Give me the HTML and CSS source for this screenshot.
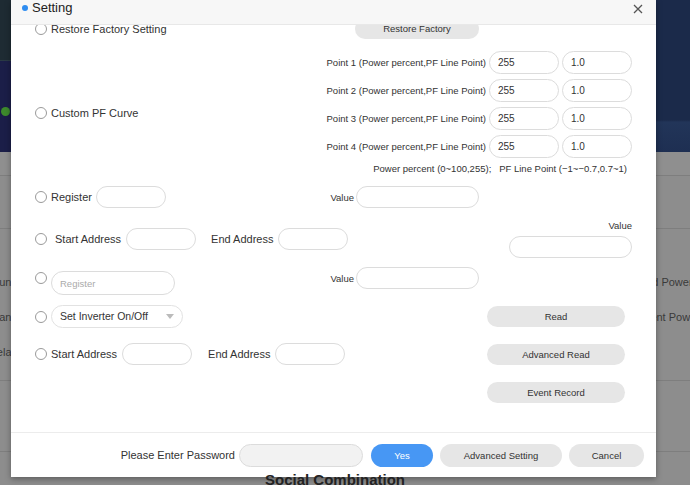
FILE: index.html
```html
<!DOCTYPE html>
<html lang="en">
<head>
  <meta charset="UTF-8" />
  <title>Setting</title>
  <meta name="viewport" content="width=device-width, initial-scale=1.0" />
  <link rel="stylesheet" href="styles.css">
</head>
<body>

<div class="page">

  <!-- page behind the dialog -->
  <div class="backdrop">
    <div class="side side-left">
      <div class="band band-dark"></div>
      <div class="band band-navy"><span class="led"></span></div>
      <div class="bg-row bg-row-a"></div>
      <div class="bg-row bg-row-b"></div>
      <div class="bg-list">
        <div class="bg-text">Runs</div>
        <div class="bg-text">Trans</div>
        <div class="bg-text">Delay</div>
      </div>
      <div class="bg-row bg-row-c"></div>
    </div>
    <div class="side side-right">
      <div class="band band-blue"></div>
      <div class="bg-row bg-row-a"></div>
      <div class="bg-row bg-row-b"></div>
      <div class="bg-list">
        <div class="bg-text">Rated Power</div>
        <div class="bg-text">Current Power</div>
        <div class="bg-text"></div>
      </div>
      <div class="bg-row bg-row-c"></div>
    </div>
  </div>

  <div class="bg-title">Social Combination</div>

  <!-- Setting dialog -->
  <div class="modal">
    <div class="modal-head">
      <span class="dot"></span>
      <span class="title">Setting</span>
      <svg class="close" width="10" height="10" viewBox="0 0 10 10">
        <path d="M1 1L9 9M9 1L1 9" stroke="#555" stroke-width="1.3" fill="none"/>
      </svg>
    </div>

    <div class="modal-body">

      <div class="row row-restore">
        <label class="opt opt-wide"><span class="radio"></span>Restore Factory Setting</label>
        <button class="btn btn-restore">Restore Factory</button>
      </div>

      <div class="row row-pf">
        <label class="opt"><span class="radio"></span>Custom PF Curve</label>
        <div class="points">
          <div class="pt-row">
            <span class="small">Point 1 (Power percent,PF Line Point)</span>
            <input class="field field-pt" value="255">
            <input class="field field-pt" value="1.0">
          </div>
          <div class="pt-row">
            <span class="small">Point 2 (Power percent,PF Line Point)</span>
            <input class="field field-pt" value="255">
            <input class="field field-pt" value="1.0">
          </div>
          <div class="pt-row">
            <span class="small">Point 3 (Power percent,PF Line Point)</span>
            <input class="field field-pt" value="255">
            <input class="field field-pt" value="1.0">
          </div>
          <div class="pt-row">
            <span class="small">Point 4 (Power percent,PF Line Point)</span>
            <input class="field field-pt" value="255">
            <input class="field field-pt" value="1.0">
          </div>
          <div class="note">Power percent (0~100,255);&nbsp;&nbsp; PF Line Point (&minus;1~&minus;0.7,0.7~1)</div>
        </div>
      </div>

      <div class="row row-reg">
        <div class="lhs">
          <label class="opt"><span class="radio"></span>Register</label>
          <input class="field field-sm">
        </div>
        <div class="val">
          <span class="small">Value</span>
          <input class="field field-md">
        </div>
      </div>

      <div class="row row-range">
        <span class="radio"></span>
        <span class="lbl lbl-start">Start Address</span>
        <input class="field field-sm">
        <span class="lbl lbl-end">End Address</span>
        <input class="field field-sm">
        <div class="val-stack">
          <span class="small">Value</span>
          <input class="field field-md">
        </div>
      </div>

      <div class="row row-reg2">
        <div class="lhs">
          <span class="radio"></span>
          <input class="field field-reg" placeholder="Register">
        </div>
        <div class="val">
          <span class="small">Value</span>
          <input class="field field-md">
        </div>
      </div>

      <div class="row row-select">
        <span class="radio"></span>
        <div class="select">Set Inverter On/Off<span class="caret"></span></div>
        <button class="btn btn-side">Read</button>
      </div>

      <div class="row row-range2">
        <span class="radio"></span>
        <span class="lbl lbl-start2">Start Address</span>
        <input class="field field-sm">
        <span class="lbl lbl-end2">End Address</span>
        <input class="field field-sm">
        <button class="btn btn-side">Advanced Read</button>
      </div>

      <div class="row row-event">
        <button class="btn btn-side">Event Record</button>
      </div>

    </div>

    <div class="modal-foot">
      <span class="foot-label">Please Enter Password</span>
      <input class="field field-pass" type="password">
      <button class="btn btn-yes">Yes</button>
      <button class="btn btn-adv">Advanced Setting</button>
      <button class="btn btn-cancel">Cancel</button>
    </div>
  </div>

</div>

</body>
</html>
```

FILE: styles.css
```css
body, html {
  margin: 0;
  padding: 0;
  font-family: "Liberation Sans", Arial, sans-serif;
  color: #333;
}

.page {
  position: relative;
  width: 690px;
  height: 485px;
  overflow: hidden;
  background: #8d8d8d;
}

/* page behind the dialog */
.backdrop {
  display: flex;
  justify-content: space-between;
  height: 100%;
}

.side {
  display: flex;
  flex-direction: column;
  width: 60px;
  overflow: hidden;
}

.side-right {
  width: 80px;
}

.band-dark {
  height: 60px;
  background: #1e2b33;
  border-bottom: 1px solid #2a3a44;
}

.band-navy {
  height: 91px;
  background: #1b1e48;
  display: flex;
  align-items: center;
}

.band-blue {
  height: 152px;
  background: linear-gradient(#1b2a4a 0, #1b2a4a 120px, #223559 122px, #1e2f52 152px);
}

.led {
  width: 9px;
  height: 9px;
  border-radius: 50%;
  background: #3d8a2c;
  margin-left: 1px;
  margin-top: 10px;
}

.bg-row {
  border-bottom: 1px solid #7e7e7e;
}

.bg-row-a {
  height: 23px;
  background: #8f8f8f;
}

.bg-row-b {
  height: 52px;
  background: #8d8d8d;
}

.bg-row-c {
  height: 70px;
  border-top: 1px solid #7e7e7e;
}

.bg-list {
  height: 151px;
  padding-top: 46px;
  box-sizing: border-box;
}

.bg-text {
  height: 35px;
  font-size: 11px;
  line-height: 14px;
  color: #3a3a3a;
  white-space: nowrap;
}

.side-left .bg-text {
  text-align: right;
  width: 30px;
  margin-left: -13px;
}

.side-right .bg-text {
  padding-left: 19px;
}

.bg-title {
  position: absolute;
  left: 265px;
  top: 471px;
  font-size: 15px;
  font-weight: bold;
  color: #222;
  z-index: 2;
}

/* dialog */
.modal {
  position: absolute;
  left: 11px;
  top: 0;
  width: 645px;
  height: 477px;
  background: #fff;
  box-shadow: 0 2px 6px rgba(0, 0, 0, 0.35);
  display: flex;
  flex-direction: column;
  z-index: 1;
}

.modal-head {
  height: 23px;
  background: #f7f7f7;
  border-bottom: 1px solid #e8e8e8;
  display: flex;
  align-items: flex-start;
  padding: 1px 13px 0 11px;
  box-sizing: content-box;
  position: relative;
  z-index: 1;
}

.dot {
  width: 6px;
  height: 6px;
  border-radius: 50%;
  background: #2e8cf0;
  margin-top: 4px;
  margin-right: 4px;
}

.title {
  font-size: 13px;
  line-height: 14px;
  color: #222;
}

.close {
  margin-left: auto;
  margin-top: 3px;
}

.modal-body {
  flex: 1;
  overflow: hidden;
  padding: 0 24px;
}

.row {
  display: flex;
  align-items: center;
}

.radio {
  flex: none;
  width: 10px;
  height: 10px;
  border: 1px solid #9a9a9a;
  border-radius: 50%;
  background: #fff;
}

.opt {
  display: flex;
  align-items: center;
  font-size: 11px;
}

.opt .radio {
  margin-right: 4px;
}

.opt-wide {
  width: 320px;
}

.small {
  font-size: 9.5px;
  white-space: nowrap;
}

.lbl {
  font-size: 11px;
  white-space: nowrap;
}

.field {
  box-sizing: border-box;
  border: 1px solid #dcdcdc;
  border-radius: 12px;
  background: #fff;
  height: 22px;
  padding: 0 8px;
  font-family: inherit;
  font-size: 10px;
  color: #333;
  outline: none;
}

.field::placeholder {
  color: #aaa;
}

.btn {
  box-sizing: border-box;
  border: none;
  border-radius: 11px;
  background: #e6e6e6;
  font-family: inherit;
  font-size: 9.5px;
  color: #333;
  height: 21px;
  padding: 0;
}

/* restore */
.row-restore {
  height: 20px;
  margin-top: -6px;
}

.btn-restore {
  width: 124px;
  height: 20px;
  border-radius: 10px;
  line-height: 16px;
}

/* custom pf curve */
.row-pf {
  margin-top: 12px;
}

.points {
  margin-left: auto;
  display: flex;
  flex-direction: column;
  gap: 5px;
}

.pt-row {
  display: flex;
  align-items: center;
  justify-content: flex-end;
  gap: 3px;
}

.field-pt {
  width: 70px;
  height: 23px;
}

.note {
  font-size: 9.5px;
  line-height: 12px;
  text-align: right;
  margin-right: 5px;
}

/* register / value */
.row-reg {
  margin-top: 11px;
  height: 22px;
}

.lhs {
  width: 285px;
  display: flex;
  align-items: center;
  gap: 4px;
}

.val {
  width: 159px;
  display: flex;
  align-items: center;
  justify-content: flex-end;
  gap: 2px;
}

.field-sm {
  width: 70px;
}

.field-md {
  width: 123px;
}

/* start / end address */
.row-range {
  margin-top: 12px;
  height: 38px;
}

.row-range .field,
.row-range2 .field {
  margin-left: 5px;
}

.lbl-start {
  margin-left: 8px;
}

.lbl-end {
  margin-left: 15px;
}

.val-stack {
  margin-left: auto;
  display: flex;
  flex-direction: column;
  align-items: flex-end;
  gap: 4px;
}

.row-range .val-stack .field {
  margin-left: 0;
}

.val-stack .small {
  line-height: 12px;
}

/* register with placeholder */
.row-reg2 {
  margin-top: 9px;
  height: 28px;
  align-items: flex-start;
}

.row-reg2 .lhs {
  align-items: flex-start;
}

.row-reg2 .radio {
  margin-top: 5px;
}

.field-reg {
  width: 124px;
  height: 24px;
  margin-top: 4px;
  font-size: 9.5px;
}

/* inverter on/off */
.row-select {
  margin-top: 10px;
  height: 23px;
}

.select {
  box-sizing: border-box;
  width: 132px;
  height: 23px;
  margin-left: 4px;
  border: 1px solid #e2e2e2;
  border-radius: 12px;
  padding-left: 8px;
  font-size: 10.5px;
  line-height: 21px;
  display: flex;
  align-items: center;
}

.caret {
  margin-left: auto;
  margin-right: 8px;
  width: 0;
  height: 0;
  border-left: 4.5px solid transparent;
  border-right: 4.5px solid transparent;
  border-top: 5px solid #bbb;
}

.btn-side {
  width: 138px;
  margin-left: auto;
  margin-right: 7px;
}

.row-range2 {
  margin-top: 15px;
  height: 22px;
}

.lbl-start2 {
  margin-left: 4px;
}

.lbl-end2 {
  margin-left: 16px;
}

.row-event {
  margin-top: 17px;
  height: 21px;
}

/* footer */
.modal-foot {
  height: 44px;
  border-top: 1px solid #ececec;
  display: flex;
  align-items: center;
  justify-content: flex-end;
  padding-right: 12px;
  gap: 7px;
}

.foot-label {
  font-size: 11px;
  margin-right: -3px;
}

.field-pass {
  width: 124px;
  height: 23px;
  background: #f2f2f2;
  margin-right: 1px;
}

.modal-foot .btn {
  height: 23px;
  border-radius: 12px;
}

.btn-yes {
  width: 62px;
  background: #4797f4;
  color: #fff;
}

.btn-adv {
  width: 122px;
}

.btn-cancel {
  width: 75px;
}
```
